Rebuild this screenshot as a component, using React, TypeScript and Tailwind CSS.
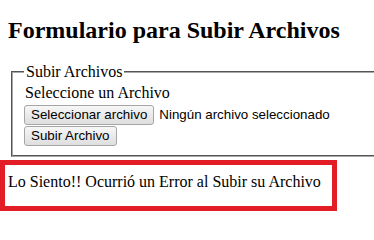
export default function App() {
  return (
    <div className="w-[374px] h-[229px] overflow-hidden bg-white text-black font-['Liberation_Serif','Times_New_Roman',serif]">
      <h1 className="pl-2 pt-[16px] text-[24px] leading-[28px] font-bold">
        Formulario para Subir Archivos
      </h1>

      <form className="mt-[19px]">
        <fieldset className="ml-[11px] w-[400px] border-2 border-[#a8a8a8] [border-style:groove] px-[12px] pb-[9px]">
          <legend className="-ml-px px-[2px] text-base leading-[18px]">Subir Archivos</legend>
          <p className="pt-[3px] text-base leading-[18px]">Seleccione un Archivo</p>
          <div className="mt-[3px] flex flex-col items-start gap-px font-['Liberation_Sans',Arial,sans-serif] text-[13.33px]">
            <div className="flex items-center">
              <button
                type="button"
                className="-ml-px h-[20px] px-[6px] leading-[18px] border border-[#a6a6a6] rounded-[3px] bg-gradient-to-b from-[#f7f7f7] to-[#dedede]"
              >
                Seleccionar archivo
              </button>
              <span className="ml-[5px]">Ningún archivo seleccionado</span>
            </div>
            <button
              type="submit"
              className="-ml-px h-[20px] px-[6px] leading-[18px] border border-[#a6a6a6] rounded-[3px] bg-gradient-to-b from-[#f7f7f7] to-[#dedede]"
            >
              Subir Archivo
            </button>
          </div>
        </fieldset>
      </form>

      <div className="mt-[3px] w-[337px] border-[5px] border-[#e31d25] pl-[3px] pt-[8px] pb-[15px] text-base leading-[18px]">
        Lo Siento!! Ocurrió un Error al Subir su Archivo
      </div>
    </div>
  );
}
